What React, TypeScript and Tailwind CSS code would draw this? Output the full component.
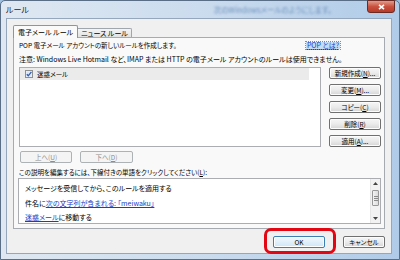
import React from "react";
import clsx from "clsx";

const jp = "font-['Noto_Sans_CJK_JP','Noto_Sans',sans-serif] [font-feature-settings:'palt']";

type BtnProps = {
  children: React.ReactNode;
  className?: string;
  disabled?: boolean;
  primary?: boolean;
};

const WinButton = ({ children, className, disabled, primary }: BtnProps) => (
  <div
    className={clsx(
      "h-[12px] flex items-center justify-center rounded-[2px] border text-[6.5px] leading-none",
      disabled
        ? "border-[#adb2b5] bg-[#f4f4f4] text-[#8d8d8d]"
        : primary
        ? "border-[#3c7fb1] bg-linear-to-b from-[#f3f9fd] to-[#cde6f6] text-black shadow-[inset_0_0_0_1px_#ffffff]"
        : "border-[#707070] bg-linear-to-b from-[#f6f6f6] via-[#ebebeb] to-[#d5d5d5] text-black shadow-[inset_0_0_0_1px_#fcfcfc]",
      className
    )}
  >
    {children}
  </div>
);

const Checkbox = () => (
  <svg width="8" height="8" viewBox="0 0 8 8">
    <rect x="0.5" y="0.5" width="7" height="7" fill="#eef3fa" stroke="#8e8f8f" />
    <rect x="1.5" y="1.5" width="5" height="5" fill="#dbe6f4" />
    <path d="M1.8 4.2 L3.3 5.8 L6.4 1.9" fill="none" stroke="#2f5fb8" strokeWidth="1.3" />
  </svg>
);

const Scrollbar = () => (
  <div className="w-[10px] flex flex-col bg-[#f2f2f2] border-l border-[#e6e6e6]">
    <div className="h-[9px] flex items-center justify-center">
      <svg width="5" height="3" viewBox="0 0 5 3">
        <path d="M0 3 L2.5 0 L5 3 Z" fill="#444" />
      </svg>
    </div>
    <div className="mx-[1px] mt-[2px] h-[16px] rounded-[1px] border border-[#989898] bg-linear-to-r from-[#f4f4f4] to-[#dcdcdc] flex flex-col items-center justify-center gap-[1px]">
      <div className="w-[4px] h-px bg-[#8a8a8a]" />
      <div className="w-[4px] h-px bg-[#8a8a8a]" />
      <div className="w-[4px] h-px bg-[#8a8a8a]" />
    </div>
    <div className="flex-1" />
    <div className="h-[9px] flex items-center justify-center">
      <svg width="5" height="3" viewBox="0 0 5 3">
        <path d="M0 0 L2.5 3 L5 0 Z" fill="#444" />
      </svg>
    </div>
  </div>
);

const Link = ({ children }: { children: React.ReactNode }) => (
  <span className="text-[#1a3cc8] underline underline-offset-[1px]">{children}</span>
);

export default function App() {
  return (
    <div className={clsx("w-[400px] h-[260px] overflow-hidden bg-[#9fbfe0] relative", jp)}>
      <div className="w-full h-full flex flex-col border border-[#5a6e85] rounded-t-[5px] bg-linear-to-r from-[#dfe8f2] via-[#cbdcee] to-[#b0cbe8]">
        {/* title bar */}
        <div className="h-[17px] flex items-start pl-[5px] pr-[4px]">
          <span className="mt-[4px] text-[8px] leading-[10px] text-[#1e1e1e]">ルール</span>
          <span className="ml-[185px] mt-[4px] text-[7.5px] leading-[10px] text-[#6f91bb] blur-[1px]">
            次のWindowsメールのようにします。
          </span>
          <div className="ml-auto -mt-px w-[28px] h-[13px] rounded-b-[3px] border border-[#6b2a24] bg-linear-to-b from-[#e19b8e] via-[#c9513f] to-[#b83a26] flex items-center justify-center">
            <svg width="7" height="6" viewBox="0 0 7 6">
              <path d="M1 0.8 L6 5.2 M6 0.8 L1 5.2" stroke="#ffffff" strokeWidth="1.6" />
            </svg>
          </div>
        </div>

        {/* body */}
        <div className="flex-1 pl-[5px] pr-[7px] pb-[5px] flex">
          <div className="flex-1 border border-[#94a7bd] bg-[#f0f0f0] flex flex-col">
            <div className="ml-[6px] mt-[6px] w-[372px]">
              {/* tabs */}
              <div className="h-[12px] flex items-end">
                <div className="h-[13px] -mb-px z-10 px-[4px] border border-b-0 border-[#8f959d] bg-[#fafafa] rounded-t-[2px] text-[7px] leading-[12px] text-black">
                  電子メール ルール
                </div>
                <div className="h-[9px] px-[3px] border border-l-0 border-b-0 border-[#a0a6ae] bg-linear-to-b from-[#f4f4f4] to-[#e2e2e2] rounded-tr-[2px] text-[7px] leading-[9px] text-black">
                  ニュース ルール
                </div>
              </div>
              {/* tab panel */}
              <div className="h-[192px] border border-[#a6abb2] bg-[#f9f9f9] flex flex-col pl-[5px] pr-[2px]">
                <div className="mt-[2px] h-[10px] flex items-center text-[6.5px] leading-none text-black">
                  <span>POP 電子メール アカウントの新しいルールを作成します。</span>
                  <span className="ml-auto mr-[42px] px-[1px] text-[7px] bg-[#c6dcf2] text-[#1a3cc8] underline outline-dotted outline-1 outline-[#7a8ea8]">
                    POP とは?
                  </span>
                </div>
                <div className="mt-[4px] h-[10px] flex items-center text-[7px] leading-none text-black">
                  注意: Windows Live Hotmail など、IMAP または HTTP の電子メール アカウントのルールは使用できません。
                </div>
                <div className="mt-[3px] flex gap-[8px]">
                  <div className="w-[302px] h-[80px] border border-[#abadb3] bg-white">
                    <div className="w-[289px] h-[12px] bg-[#ebebeb] flex items-center pl-[5px] gap-[4px] text-[6.5px] leading-none">
                      <Checkbox />
                      <span>迷惑メール</span>
                    </div>
                  </div>
                  <div className="w-[52px] flex flex-col gap-[5px]">
                    <WinButton>
                      新規作成(<u>N</u>)...
                    </WinButton>
                    <WinButton>
                      変更(<u>M</u>)...
                    </WinButton>
                    <WinButton>
                      コピー(<u>C</u>)
                    </WinButton>
                    <WinButton>
                      削除(<u>R</u>)
                    </WinButton>
                    <WinButton>
                      適用(<u>A</u>)...
                    </WinButton>
                  </div>
                </div>
                <div className="mt-[4px] flex gap-[8px] pl-[1px]">
                  <WinButton disabled className="w-[52px]">
                    上へ(<u>U</u>)
                  </WinButton>
                  <WinButton disabled className="w-[53px]">
                    下へ(<u>D</u>)
                  </WinButton>
                </div>
                <div className="mt-[5px] h-[9px] flex items-center text-[6.5px] leading-none text-black">
                  この説明を編集するには、下線付きの単語をクリックしてください(<u>L</u>):
                </div>
                <div className="mt-[1px] -ml-[1px] mr-[1px] h-[46px] border border-[#abadb3] bg-white flex">
                  <div className="flex-1 pl-[6px] pt-[2px] text-[7px] leading-[14.5px] text-black">
                    <div>メッセージを受信してから、このルールを適用する</div>
                    <div>
                      件名に<Link>次の文字列が含まれる: 「meiwaku」</Link>
                    </div>
                    <div>
                      <Link>迷惑メール</Link>に移動する
                    </div>
                  </div>
                  <Scrollbar />
                </div>
              </div>
            </div>
            {/* dialog buttons */}
            <div className="mt-[7px] flex justify-end gap-[18px] pr-[6px]">
              <WinButton primary className="w-[52px]">
                OK
              </WinButton>
              <WinButton className="w-[42px]">キャンセル</WinButton>
            </div>
          </div>
        </div>
      </div>
      {/* red highlight around OK */}
      <div className="absolute left-[264px] top-[228px] w-[72px] h-[26px] rounded-[7px] border-[3px] border-[#e30613]" />
    </div>
  );
}
